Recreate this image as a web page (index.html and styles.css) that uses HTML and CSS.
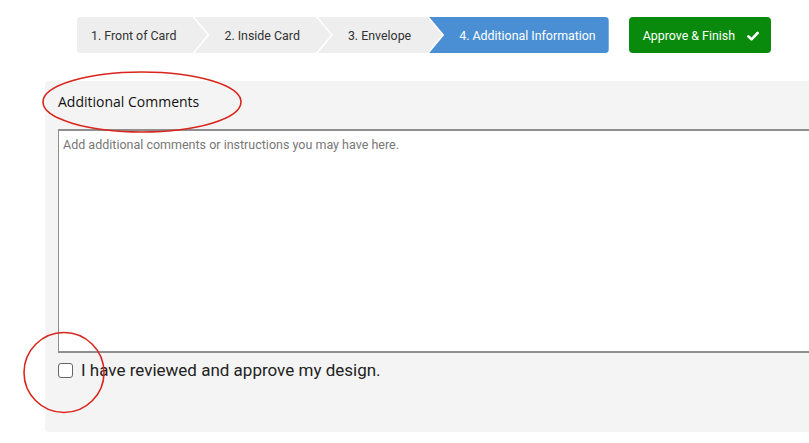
FILE: index.html
```html
<!DOCTYPE html>
<html lang="en">
<head>
<meta charset="utf-8">
<title>Additional Information</title>
<link rel="stylesheet" href="styles.css">
</head>
<body>
<div class="page">
  <div class="topbar">
    <ol class="steps">
      <li class="step step-first">1. Front of Card</li>
      <li class="step step-mid step-2">2. Inside Card</li>
      <li class="step step-mid step-3">3. Envelope</li>
      <li class="step step-last step-active">4. Additional Information</li>
    </ol>
    <button class="approve-btn" type="button">Approve &amp; Finish
      <svg class="check" viewBox="0 0 12 10" width="12" height="10" aria-hidden="true"><path d="M1.4 5.4 L4.5 8.3 L10.6 2" fill="none" stroke="#fff" stroke-width="2.6" stroke-linecap="round" stroke-linejoin="round"/></svg>
    </button>
  </div>

  <section class="panel">
    <h2 class="panel-title">Additional Comments</h2>
    <textarea class="comments" placeholder="Add additional comments or instructions you may have here."></textarea>
    <label class="approve-row">
      <span class="checkbox"></span>
      <span class="approve-text">I have reviewed and approve my design.</span>
    </label>
  </section>

  <svg class="annotations" width="809" height="443" viewBox="0 0 809 443" aria-hidden="true">
    <ellipse cx="142" cy="102" rx="99" ry="30" fill="none" stroke="#d9261c" stroke-width="1.6"/>
    <circle cx="64" cy="372.5" r="40" fill="none" stroke="#d9261c" stroke-width="1.6"/>
  </svg>
</div>
</body>
</html>
```

FILE: styles.css
```css
* { box-sizing: border-box; }

html, body {
  margin: 0;
  padding: 0;
  background: #ffffff;
  overflow: hidden;
}

body {
  font-family: Roboto, "Liberation Sans", Arial, sans-serif;
  color: #333333;
  width: 809px;
  height: 443px;
}

.page {
  position: relative;
  width: 809px;
  height: 443px;
}

.topbar {
  display: flex;
  align-items: flex-start;
  padding: 17px 0 0 77px;
}

.steps {
  display: flex;
  list-style: none;
  margin: 0;
  padding: 0;
  height: 36px;
}

.step {
  height: 36px;
  display: flex;
  align-items: center;
  font-size: 12.4px;
  color: #333333;
  background: #eeeeee;
  white-space: nowrap;
}

.step-first {
  padding: 0 31px 0 14px;
  border-radius: 3px 0 0 3px;
  clip-path: polygon(0 0, calc(100% - 15px) 0, 100% 50%, calc(100% - 15px) 100%, 0 100%);
}

.step-mid {
  margin-left: -13px;
  padding: 0 31px 0 30px;
  clip-path: polygon(0 0, calc(100% - 15px) 0, 100% 50%, calc(100% - 15px) 100%, 0 100%, 15px 50%);
}

.step-last {
  margin-left: -13px;
  padding: 0 13px 0 30px;
  border-radius: 0 4px 4px 0;
  clip-path: polygon(0 0, 100% 0, 100% 100%, 0 100%, 15px 50%);
}

.step-active {
  background: #4a8fd3;
  color: #ffffff;
}

.approve-btn {
  margin-left: 20px;
  height: 36px;
  width: 142px;
  display: flex;
  align-items: center;
  justify-content: flex-start;
  gap: 12px;
  padding: 0 0 0 14px;
  border: 0;
  border-radius: 4px;
  background: #0a8a0c;
  color: #ffffff;
  font-family: Roboto, "Liberation Sans", Arial, sans-serif;
  font-size: 12.4px;
}

.check {
  display: block;
  margin-top: 1px;
}

.panel {
  margin: 28px 0 0 45px;
  width: 800px;
  height: 351px;
  background: #f4f4f4;
  border-radius: 4px 0 0 4px;
  padding: 11px 0 0 13px;
}

.panel-title {
  margin: 0;
  font-family: "Open Sans", "Noto Sans", sans-serif;
  font-weight: 400;
  font-size: 14px;
  line-height: 20px;
  color: #111111;
}

.comments {
  display: block;
  margin-top: 17px;
  width: 780px;
  height: 224px;
  resize: none;
  background: #ffffff;
  border: 1px solid #8f8f8f;
  border-top: 2px solid #8f8f8f;
  border-bottom: 2px solid #8f8f8f;
  border-radius: 0;
  padding: 6px 4px;
  font-family: Roboto, "Liberation Sans", Arial, sans-serif;
  font-size: 12.5px;
  line-height: 16px;
  color: #333333;
}

.comments::placeholder {
  color: #777777;
}

.approve-row {
  display: flex;
  align-items: center;
  gap: 8px;
  margin-top: 6px;
  height: 22px;
}

.checkbox {
  width: 15px;
  height: 15px;
  border: 1px solid #666666;
  border-radius: 3px;
  background: #ffffff;
  flex: none;
}

.approve-text {
  font-size: 17px;
  color: #222222;
}

.annotations {
  position: absolute;
  left: 0;
  top: 0;
  pointer-events: none;
}
```
